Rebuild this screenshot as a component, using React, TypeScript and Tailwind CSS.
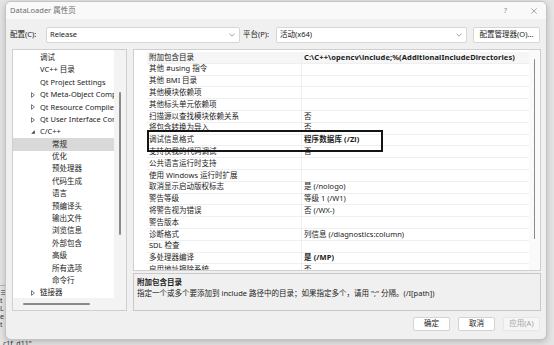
import React from 'react';

type TreeItem = { label: string; level: 0 | 1; arrow?: 'closed' | 'open'; selected?: boolean };

const treeItems: TreeItem[] = [
  { label: '调试', level: 0 },
  { label: 'VC++ 目录', level: 0 },
  { label: 'Qt Project Settings', level: 0 },
  { label: 'Qt Meta-Object Compiler', level: 0, arrow: 'closed' },
  { label: 'Qt Resource Compiler', level: 0, arrow: 'closed' },
  { label: 'Qt User Interface Compiler', level: 0, arrow: 'closed' },
  { label: 'C/C++', level: 0, arrow: 'open' },
  { label: '常规', level: 1, selected: true },
  { label: '优化', level: 1 },
  { label: '预处理器', level: 1 },
  { label: '代码生成', level: 1 },
  { label: '语言', level: 1 },
  { label: '预编译头', level: 1 },
  { label: '输出文件', level: 1 },
  { label: '浏览信息', level: 1 },
  { label: '外部包含', level: 1 },
  { label: '高级', level: 1 },
  { label: '所有选项', level: 1 },
  { label: '命令行', level: 1 },
  { label: '链接器', level: 0, arrow: 'closed' },
];

type Prop = { name: string; value?: string; bold?: boolean };

const properties: Prop[] = [
  { name: '附加包含目录', value: 'C:\\C++\\opencv\\include;%(AdditionalIncludeDirectories)', bold: true },
  { name: '其他 #using 指令' },
  { name: '其他 BMI 目录' },
  { name: '其他模块依赖项' },
  { name: '其他标头单元依赖项' },
  { name: '扫描源以查找模块依赖关系', value: '否' },
  { name: '将包含转换为导入', value: '否' },
  { name: '调试信息格式', value: '程序数据库 (/Zi)', bold: true },
  { name: '支持仅我的代码调试', value: '否' },
  { name: '公共语言运行时支持' },
  { name: '使用 Windows 运行时扩展' },
  { name: '取消显示启动版权标志', value: '是 (/nologo)' },
  { name: '警告等级', value: '等级 1 (/W1)' },
  { name: '将警告视为错误', value: '否 (/WX-)' },
  { name: '警告版本' },
  { name: '诊断格式', value: '列信息 (/diagnostics:column)' },
  { name: 'SDL 检查' },
  { name: '多处理器编译', value: '是 (/MP)', bold: true },
  { name: '启用地址擦除系统', value: '否' },
];

function Chevron() {
  return (
    <svg width="6" height="4" viewBox="0 0 6 4">
      <path d="M0.5 0.8 L3 3.2 L5.5 0.8" fill="none" stroke="#8a8a8a" strokeWidth="0.8" />
    </svg>
  );
}

function TreeArrow({ open }: { open: boolean }) {
  if (open) {
    return (
      <svg width="4" height="4" viewBox="0 0 4 4">
        <path d="M3.8 0.2 L3.8 3.8 L0.2 3.8 Z" fill="#3c3c3c" />
      </svg>
    );
  }
  return (
    <svg width="4" height="6" viewBox="0 0 4 6">
      <path d="M0.5 0.6 L3.4 3 L0.5 5.4 Z" fill="none" stroke="#555" strokeWidth="0.8" />
    </svg>
  );
}

function Select({ value, width }: { value: string; width: string }) {
  return (
    <div className={`${width} h-[16px] bg-white border border-[#d6d6d6] rounded-[2px] flex items-center justify-between pl-[3px] pr-[4px]`}>
      <span>{value}</span>
      <Chevron />
    </div>
  );
}

function TreePanel() {
  return (
    <div className="w-[115px] h-[262px] border border-[#cfcfcf] flex flex-col bg-[#f3f3f3]">
      <div className="flex flex-1 min-h-0">
        <div className="flex-1 bg-white pt-[1.5px] overflow-hidden">
          {treeItems.map((item, i) => (
            <div
              key={i}
              className={`h-[12.4px] flex items-center whitespace-nowrap ${item.selected ? 'bg-[#d9d9d9]' : ''}`}
            >
              <span className={`${item.level === 0 ? 'w-[27px]' : 'w-[39px]'} shrink-0 flex justify-end pr-[5px]`}>
                {item.arrow && <TreeArrow open={item.arrow === 'open'} />}
              </span>
              <span>{item.label}</span>
            </div>
          ))}
        </div>
        <div className="w-[12px] flex justify-center">
          <div className="mt-[42px] h-[143px] w-[1.5px] bg-[#8a8a8a] rounded-full" />
        </div>
      </div>
      <div className="h-[12px] flex items-center pl-[10px]">
        <div className="w-[67px] h-[1.5px] bg-[#8a8a8a] rounded-full" />
      </div>
    </div>
  );
}

function PropertyGrid() {
  return (
    <div className="relative h-[222px] border border-[#cfcfcf] bg-white flex">
      <div className="w-[13px] shrink-0" />
      <div className="flex-1 pt-[2px] overflow-hidden">
        {properties.map((p, i) => (
          <div key={i} className={`h-[11.8px] flex border-b border-[#efefef] whitespace-nowrap ${i === 0 ? 'bg-[#f6f6f6]' : ''}`}>
            <div className="w-[155px] shrink-0 pl-[2px] flex items-center border-r border-[#efefef]">{p.name}</div>
            <div className={`flex-1 pl-[2px] flex items-center ${p.bold ? 'font-bold tracking-[0.1px]' : ''}`}>{p.value}</div>
          </div>
        ))}
      </div>
      <div className="w-[11px] shrink-0 flex justify-center bg-[#fafafa]">
        <div className="mt-[9px] h-[180px] w-[1.5px] bg-[#8a8a8a] rounded-full" />
      </div>
      <div className="absolute left-[13px] top-[80px] w-[236px] h-[22px] border-2 border-[#141414]" />
    </div>
  );
}

function Button({ label, disabled }: { label: string; disabled?: boolean }) {
  return (
    <div
      className={`w-[37px] h-[14px] rounded-[2px] border flex items-center justify-center ${
        disabled ? 'bg-[#f6f6f6] border-[#e6e6e6] text-[#a3a3a3]' : 'bg-white border-[#d4d4d4]'
      }`}
    >
      {label}
    </div>
  );
}

export default function App() {
  return (
    <div className="relative w-[554px] h-[345px] overflow-hidden bg-[#e4e4e4] text-[7.5px] leading-none text-[#1b1b1b] font-[family-name:'Noto_Sans','Noto_Sans_CJK_SC',sans-serif]">
      {/* window behind the dialog */}
      <div className="absolute left-0 top-[285px] w-[6px] h-[1px] bg-[#b5b5b5]" />
      <div className="absolute left-0 top-[289px] flex flex-col gap-[1px] text-[7px] text-[#333]">
        <span>≡</span>
        <span>t</span>
        <span>L</span>
        <span>e</span>
        <span>t</span>
      </div>
      <div className="absolute left-[3px] top-[340px] text-[7px] text-[#333]">c1f, d11"</div>

      <div className="absolute left-[5px] top-[1px] w-[542px] h-[339px] rounded-[6px] bg-[#f0f0f0] border border-[#c4c4c4] shadow-[0_2px_6px_rgba(0,0,0,0.2)] flex flex-col overflow-hidden">
        <div className="h-[17px] bg-[#f9f9f9] flex items-center justify-between pl-[4px] pr-[9px]">
          <span className="text-[#6b6b6b]">DataLoader 属性页</span>
          <div className="flex items-center gap-[24px] text-[#8a8a8a]">
            <span>?</span>
            <svg width="6" height="6" viewBox="0 0 6 6">
              <path d="M0.3 0.3 L5.7 5.7 M5.7 0.3 L0.3 5.7" stroke="#8a8a8a" strokeWidth="0.7" />
            </svg>
          </div>
        </div>

        <div className="mt-[8px] flex items-center pl-[4px] pr-[6px]">
          <span className="w-[36px]">配置(C):</span>
          <Select value="Release" width="w-[194px]" />
          <span className="ml-[3px] w-[33px]">平台(P):</span>
          <Select value="活动(x64)" width="w-[191px]" />
          <div className="ml-[6px] w-[67px] h-[16px] bg-white border border-[#d6d6d6] rounded-[2px] flex items-center justify-center">
            配置管理器(O)...
          </div>
        </div>

        <div className="mt-[6px] flex gap-[6px] pl-[6px] pr-[5px]">
          <TreePanel />
          <div className="flex-1 flex flex-col gap-[2px]">
            <PropertyGrid />
            <div className="h-[38px] border border-[#c9c9c9] px-[3px] pt-[5px] flex flex-col gap-[3px]">
              <span className="font-bold">附加包含目录</span>
              <span>指定一个或多个要添加到 include 路径中的目录；如果指定多个，请用 ";" 分隔。(/I[path])</span>
            </div>
          </div>
        </div>

        <div className="mt-[6px] flex justify-end gap-[8px] pr-[6px]">
          <Button label="确定" />
          <Button label="取消" />
          <Button label="应用(A)" disabled />
        </div>
      </div>
    </div>
  );
}
